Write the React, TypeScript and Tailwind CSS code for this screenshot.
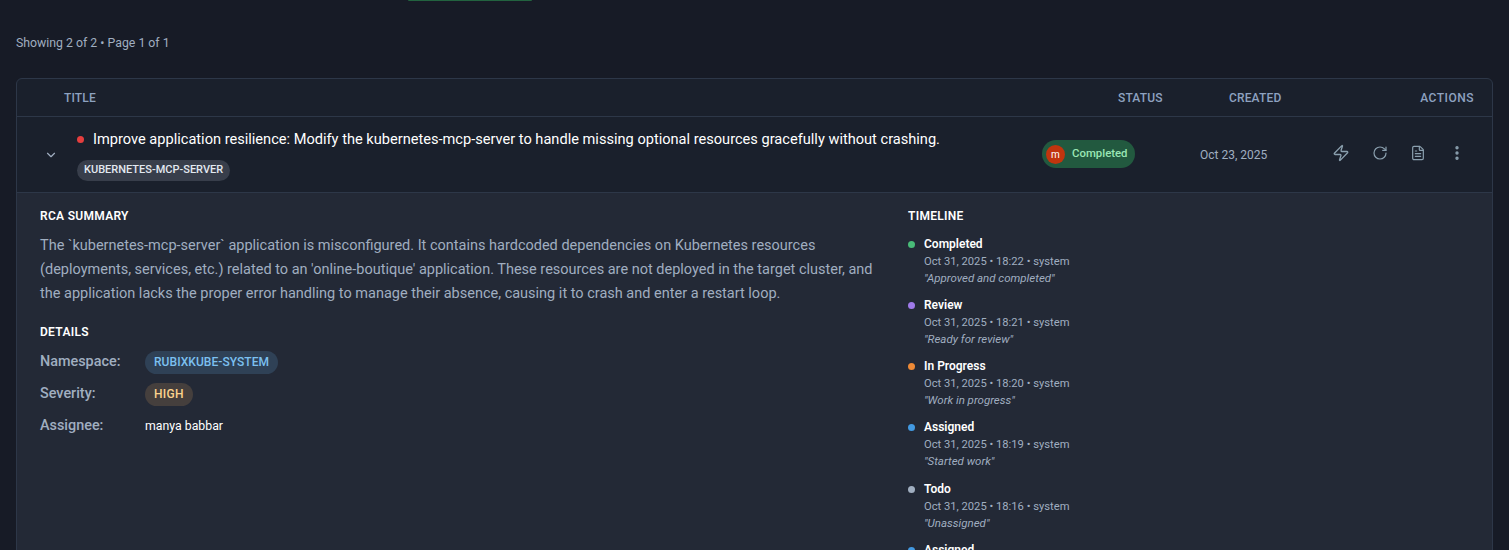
import { ChevronDown, Zap, RotateCw, FileText, EllipsisVertical } from "lucide-react";

const events = [
  { s: "Completed", t: "18:22", n: "Approved and completed", c: "bg-[#48bb78]" },
  { s: "Review", t: "18:21", n: "Ready for review", c: "bg-[#9f7aea]" },
  { s: "In Progress", t: "18:20", n: "Work in progress", c: "bg-[#ed8936]" },
  { s: "Assigned", t: "18:19", n: "Started work", c: "bg-[#4299e1]" },
  { s: "Todo", t: "18:16", n: "Unassigned", c: "bg-[#a0aec0]" },
  { s: "Assigned", t: "18:15", n: "Assigned", c: "bg-[#4299e1]" },
];

export default function App() {
  return (
    <div className="h-[550px] overflow-hidden bg-[#171b26] px-4 font-['Roboto',sans-serif]">
      <div className="ml-[392px] h-px w-[124px] rounded-b bg-[#22633f]" />
      <p className="mt-[33px] text-[12.3px] leading-[18px] text-[#a0aec0]">Showing 2 of 2 • Page 1 of 1</p>
      <div className="mt-[26px] h-[600px] rounded-md border border-[#2d3748] bg-[#1a202c]">
        <div className="flex h-[38px] items-center border-b border-[#2d3748] text-xs font-medium tracking-[0.15px] text-[#8ea2c0]">
          <span className="ml-[47px] w-[1054px] shrink-0">TITLE</span>
          <span className="w-[111px] shrink-0">STATUS</span>
          <span className="w-[100px] shrink-0">CREATED</span>
          <span className="w-[145px] shrink-0 text-right tracking-[0.5px]">ACTIONS</span>
        </div>
        <div className="flex h-[76px] items-center border-b border-[#2d3748]">
          <ChevronDown className="ml-[27px] h-3.5 w-3.5 shrink-0 text-[#a0aec0]" />
          <div className="ml-[19px] w-[965px] shrink-0">
            <div className="mt-px flex items-center">
              <span className="h-[7px] w-[7px] rounded-full bg-[#e53e3e]" />
              <span className="ml-[9px] text-[14.6px] leading-5 text-white">Improve application resilience: Modify the kubernetes-mcp-server to handle missing optional resources gracefully without crashing.</span>
            </div>
            <span className="mt-[11px] inline-flex h-[21px] items-center rounded-full bg-[#383e4b] px-[7px] text-[11px] font-medium text-[#e2e8f0]">KUBERNETES-MCP-SERVER</span>
          </div>
          <div className="-mt-px flex h-7 w-[93px] shrink-0 items-center rounded-full bg-[#22593f] pl-1">
            <span className="flex h-[19px] w-[19px] items-center justify-center rounded-full bg-[#c1350e] text-[10px] text-white">m</span>
            <span className="ml-[7px] text-[11.4px] font-medium text-[#9ae6b4]">Completed</span>
          </div>
          <span className="ml-[65px] w-[132px] shrink-0 text-xs text-[#a0aec0]">Oct 23, 2025</span>
          <div className="mb-[3px] flex items-center gap-[22px] text-[#8a9fae]">
            <Zap className="h-[18px] w-[18px]" strokeWidth={1.8} />
            <RotateCw className="h-4 w-4" strokeWidth={1.8} />
            <FileText className="h-4 w-4" strokeWidth={1.8} />
            <EllipsisVertical className="h-[18px] w-[18px]" strokeWidth={2.5} />
          </div>
        </div>
        <div className="flex h-[400px] bg-[#232936] pl-[23px] pt-[15px]">
          <div className="w-[868px]">
            <h3 className="text-xs font-semibold leading-4 tracking-[0.3px] text-white">RCA SUMMARY</h3>
            <p className="mt-[10px] w-[846px] text-[14.5px] leading-6 text-[#a0aec0]">
              The `kubernetes-mcp-server` application is misconfigured. It contains hardcoded dependencies on Kubernetes resources (deployments, services, etc.) related to an 'online-boutique' application. These resources are not deployed in the target cluster, and the application lacks the proper error handling to manage their absence, causing it to crash and enter a restart loop.
            </p>
            <h3 className="mt-[18px] text-xs font-semibold leading-4 tracking-[0.3px] text-white">DETAILS</h3>
            <div className="mt-[10px] flex h-6 items-center">
              <span className="w-[105px] text-[14.4px] font-medium text-[#a0aec0]">Namespace:</span>
              <span className="inline-flex h-[23px] items-center rounded-full bg-[#2f4156] px-[9px] text-xs font-medium tracking-[0.05px] text-[#7cc0f0]">RUBIXKUBE-SYSTEM</span>
            </div>
            <div className="mt-2 flex h-6 items-center">
              <span className="w-[105px] text-[14.4px] font-medium text-[#a0aec0]">Severity:</span>
              <span className="inline-flex h-[23px] items-center rounded-full bg-[#453f3d] px-[9px] text-xs font-medium tracking-[0.3px] text-[#fbd38d]">HIGH</span>
            </div>
            <div className="mt-2 flex h-6 items-center">
              <span className="w-[105px] text-[14.4px] font-medium text-[#a0aec0]">Assignee:</span>
              <span className="text-[12.3px] text-white">manya babbar</span>
            </div>
          </div>
          <div>
            <h3 className="text-xs font-semibold leading-4 tracking-[0.3px] text-white">TIMELINE</h3>
            <div className="mt-[11.6px] flex flex-col gap-[10.25px]">
              {events.map((e, i) => (
                <div key={i} className="flex">
                  <span className={`mt-[5px] h-[7px] w-[7px] rounded-full ${e.c}`} />
                  <div className="ml-[9px]">
                    <div className="text-xs font-semibold leading-[17px] text-white">{e.s}</div>
                    <div className="text-[11.2px] leading-[17px] text-[#a0aec0]">Oct 31, 2025 • {e.t} • system</div>
                    <div className="text-[11.5px] italic leading-[17px] text-[#a0aec0]">"{e.n}"</div>
                  </div>
                </div>
              ))}
            </div>
          </div>
        </div>
      </div>
    </div>
  );
}
